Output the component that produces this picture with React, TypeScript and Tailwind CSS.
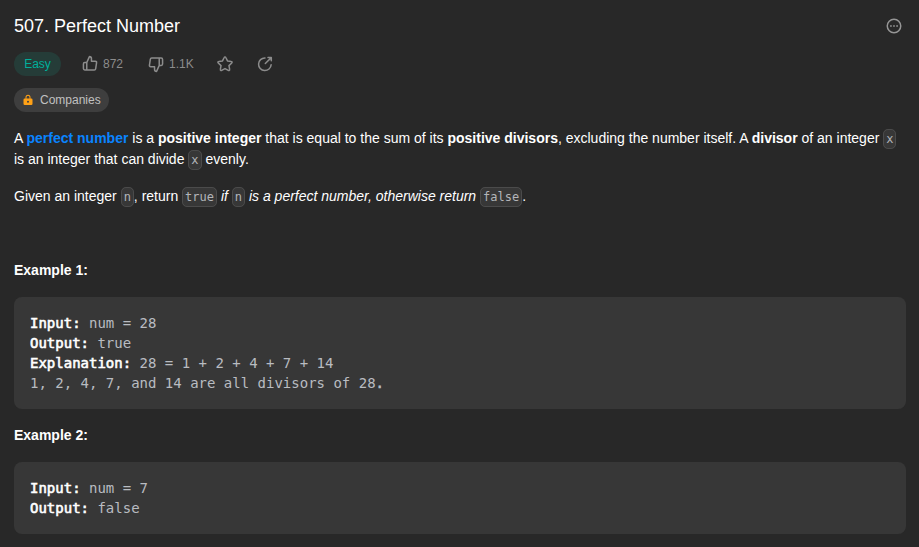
import type { ReactNode } from "react";

const THUMB =
  "M7.04 9.11l3.297-7.419a1 1 0 01.914-.594 3.67 3.67 0 013.67 3.671V7.33h4.028a2.78 2.78 0 012.78 3.2l-1.228 8.01a2.778 2.778 0 01-2.769 2.363H5.019a2.78 2.78 0 01-2.78-2.78V11.89a2.78 2.78 0 012.78-2.78H7.04zm-2.02 2a.78.78 0 00-.781.78v6.232c0 .431.35.78.78.78H6.69V11.11H5.02zm12.723 7.793a.781.781 0 00.781-.666l1.228-8.01a.78.78 0 00-.791-.898h-5.04a1 1 0 01-1-1V4.77c0-.712-.444-1.32-1.07-1.56L8.69 10.322v8.58h9.053z";

function Code({ children }: { children: ReactNode }) {
  return (
    <code className="rounded-[5px] border border-[#4b4b4b] bg-[#373737] px-[2px] py-[2px] font-['DejaVu_Sans_Mono',monospace] text-[12px] leading-[12px] not-italic text-[#b3b5b9]">
      {children}
    </code>
  );
}

function Block({ children }: { children: ReactNode }) {
  return (
    <pre className="mb-4 rounded-lg bg-[#373737] p-4 font-['DejaVu_Sans_Mono',monospace] text-[14px] leading-5 text-[#b9bcc1]">
      {children}
    </pre>
  );
}

function Label({ children }: { children: ReactNode }) {
  return <strong className="font-normal text-white [-webkit-text-stroke:0.6px_white]">{children}</strong>;
}

export default function App() {
  return (
    <main className="h-[547px] w-[919px] overflow-hidden bg-[#282828] pl-[14px] pr-[13px] font-['Liberation_Sans',Arial,sans-serif] text-white">
      <header className="flex h-[52px] items-center justify-between pr-[3px]">
        <h1 className="text-[18px] leading-7">507. Perfect Number</h1>
        <svg className="size-[18px] text-[#969696]" viewBox="0 0 24 24" fill="none" stroke="currentColor" strokeWidth="2">
          <circle cx="12" cy="12" r="9" />
          <path d="M6.8 12h2.2M10.9 12h2.2M15 12h2.2" />
        </svg>
      </header>

      <div className="flex h-6 items-center text-[12px] text-[#8c8c8c]">
        <span className="flex h-6 w-[47px] items-center justify-center rounded-full bg-[#253c38] text-[#00af9b]">Easy</span>
        <span className="ml-5 flex items-center gap-1">
          <svg className="size-[18px]" viewBox="0 0 24 24" fill="currentColor"><path d={THUMB} /></svg>
          872
        </span>
        <span className="ml-6 flex items-center gap-1">
          <svg className="size-[18px] rotate-180" viewBox="0 0 24 24" fill="currentColor"><path d={THUMB} /></svg>
          1.1K
        </span>
        <svg className="ml-[22px] size-[18px]" viewBox="0 0 24 24" fill="none" stroke="currentColor" strokeWidth="2" strokeLinejoin="round">
          <path d="M10.9 3.3a1.2 1.2 0 0 1 2.2 0l2.2 4.6 5 .7a1.2 1.2 0 0 1 .7 2.1l-3.7 3.5.9 5a1.2 1.2 0 0 1-1.8 1.3L12 18.1l-4.4 2.4a1.2 1.2 0 0 1-1.8-1.3l.9-5L3 10.7a1.2 1.2 0 0 1 .7-2.1l5-.7z" />
        </svg>
        <svg className="ml-[22px] size-[18px]" viewBox="0 0 24 24" fill="none" stroke="currentColor" strokeWidth="2" strokeLinecap="round" strokeLinejoin="round">
          <path d="M12 3.9a8.4 8.4 0 1 0 8.2 9M16 3.4h4.4v4.4M20 3.8l-7.6 7.6" />
        </svg>
      </div>

      <div className="mt-3 flex h-6 w-[95px] items-center rounded-full bg-[#3e3e3e] pl-2 text-[12px] text-[#c1c1c1]">
        <svg className="mr-[6px] size-3" viewBox="0 0 24 24" fill="#ffa116">
          <path fillRule="evenodd" d="M7 9V6.5a5 5 0 0 1 10 0V9h1.5A2.5 2.5 0 0 1 21 11.5v8a2.5 2.5 0 0 1-2.5 2.5h-13A2.5 2.5 0 0 1 3 19.500v-8A2.5 2.5 0 0 1 5.500 9zm2 0h6V6.500a3 3 0 0 0-6 0zm3 4.300a2 2 0 1 0 0 4 2 2 0 0 0 0-4z" />
        </svg>
        Companies
      </div>

      <article className="mt-4 text-[14px] leading-[21px]">
        <p className="mb-4">
          A <strong className="font-bold text-[#0a84ff]">perfect number</strong> is a <strong>positive integer</strong> that is equal to the sum of its <strong>positive divisors</strong>, excluding the number itself. A <strong>divisor</strong> of an integer <Code>x</Code> is an integer that can divide <Code>x</Code> evenly.
        </p>
        <p className="mb-4">
          Given an integer <Code>n</Code>, return <Code>true</Code> <em>if <Code>n</Code> is a perfect number, otherwise return </em><Code>false</Code>.
        </p>
        <p className="mb-4">&nbsp;</p>
        <p className="mb-4 font-bold">Example 1:</p>
        <Block>
          <Label>Input:</Label> num = 28{"\n"}
          <Label>Output:</Label> true{"\n"}
          <Label>Explanation:</Label> 28 = 1 + 2 + 4 + 7 + 14{"\n"}
          1, 2, 4, 7, and 14 are all divisors of 28<span className="[-webkit-text-stroke:0.6px_#b9bcc1]">.</span>
        </Block>
        <p className="mb-4 font-bold">Example 2:</p>
        <Block>
          <Label>Input:</Label> num = 7{"\n"}
          <Label>Output:</Label> false
        </Block>
      </article>
    </main>
  );
}
